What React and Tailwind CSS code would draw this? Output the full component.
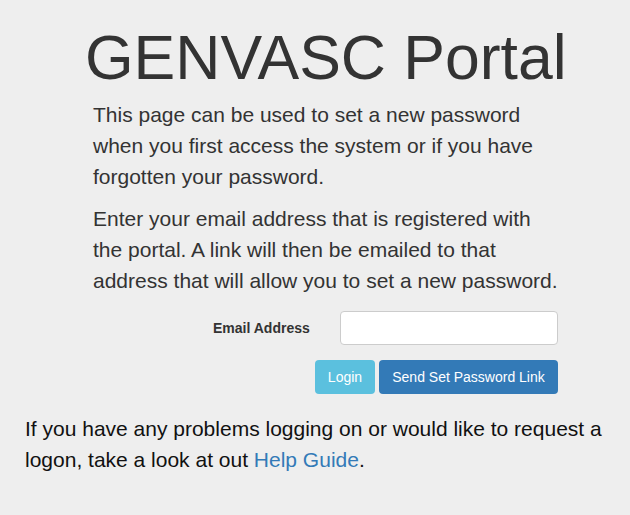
import React from 'react'

const App = () => {
  return (
    <div className="min-h-[515px] w-[630px] bg-[#eeeeee] font-['Liberation_Sans',Arial,sans-serif] text-[#333333]">
      {/* Title */}
      <h1 className="pt-[22px] pl-[85px] text-[62.5px] leading-[70px] font-normal">GENVASC Portal</h1>

      {/* Intro */}
      <div className="ml-[93px] w-[467px]">
        <p className="mt-[7px] text-[21px] leading-[31px]">
          This page can be used to set a new password<br />
          when you first access the system or if you have forgotten your password.
        </p>
        <p className="mt-[11px] text-[21px] leading-[31px]">
          Enter your email address that is registered with the portal. A link will then be emailed to that address that will allow you to set a new password.
        </p>

        {/* Form */}
        <div className="mt-[15px] flex items-center">
          <label className="ml-[120px] w-[127px] text-[14px] font-bold">Email Address</label>
          <input
            type="email"
            className="h-[34px] w-[218px] rounded-[4px] border border-[#cccccc] bg-white px-3 text-[14px] outline-none"
          />
        </div>
        <div className="mt-[15px] flex justify-end gap-[4px] pr-[2px]">
          <button className="h-[34px] w-[60px] rounded-[4px] bg-[#5bc0de] text-[14px] text-white">Login</button>
          <button className="h-[34px] w-[179px] rounded-[4px] bg-[#337ab7] text-[14px] text-white">Send Set Password Link</button>
        </div>
      </div>

      {/* Help */}
      <p className="ml-[25px] mt-[19px] w-[590px] text-[21px] leading-[31px] text-[#111111]">
        If you have any problems logging on or would like to request a logon, take a look at out{' '}
        <a href="#" className="text-[#337ab7]">Help Guide</a>.
      </p>
    </div>
  )
}

export default App
